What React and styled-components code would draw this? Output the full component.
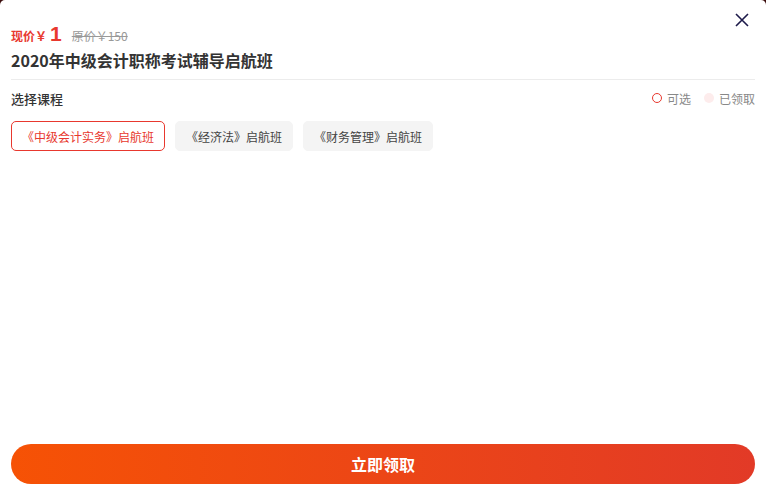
import React, { useState } from 'react';
import styled, { createGlobalStyle } from 'styled-components';

const GlobalStyle = createGlobalStyle`
  html, body {
    margin: 0;
    padding: 0;
    background: #3b0d0d;
  }
  body {
    font-family: "Noto Sans CJK SC", "Noto Sans", sans-serif;
  }
`

const Modal = styled.div`
  position: relative;
  width: 766px;
  height: 488px;
  box-sizing: border-box;
  background: #fff;
  border-radius: 5px 5px 0 0;
  padding: 22px 11px 4px;
  display: flex;
  flex-direction: column;
`
const CloseButton = styled.button`
  position: absolute;
  top: 11px;
  right: 15px;
  width: 18px;
  height: 18px;
  padding: 0;
  border: none;
  background: none;
  cursor: pointer;
  color: #1d1a4a;
`
const PriceRow = styled.div`
  display: flex;
  align-items: baseline;
  height: 27px;
`
const NowLabel = styled.span`
  color: #e8382e;
  font-size: 12px;
  font-weight: bold;
`
const NowValue = styled.span`
  color: #e8382e;
  font-family: "Liberation Sans", Arial, sans-serif;
  font-size: 21px;
  font-weight: bold;
  margin-left: 3px;
`
const OldPrice = styled.span`
  color: #999;
  font-size: 12px;
  text-decoration: line-through;
  margin-left: 10px;
`
const Title = styled.h1`
  margin: 0;
  font-size: 16px;
  line-height: 22px;
  font-weight: bold;
  color: #333;
  padding-bottom: 8px;
  border-bottom: 1px solid #ececec;
`
const SectionHead = styled.div`
  display: flex;
  justify-content: space-between;
  align-items: center;
  margin-top: 8px;
  height: 20px;
`
const SectionTitle = styled.span`
  font-size: 13px;
  font-weight: 500;
  color: #333;
`
const Legend = styled.div`
  display: flex;
  align-items: center;
  gap: 13px;
  font-size: 12px;
  color: #888;
`
const LegendItem = styled.span`
  display: flex;
  align-items: center;
  gap: 5px;
`
const Dot = styled.i`
  width: 10px;
  height: 10px;
  box-sizing: border-box;
  border-radius: 50%;
  border: ${p => (p.$filled ? 'none' : '1.5px solid #e8382e')};
  background: ${p => (p.$filled ? '#fdecec' : 'transparent')};
`
const Chips = styled.div`
  display: flex;
  gap: 10px;
  margin-top: 13px;
`
const Chip = styled.button`
  height: 30px;
  padding: 0 10px;
  box-sizing: border-box;
  border-radius: 5px;
  font-family: inherit;
  font-size: 12px;
  cursor: pointer;
  border: 1px solid ${p => (p.$active ? '#e8382e' : '#f4f4f4')};
  background: ${p => (p.$active ? '#fff' : '#f4f4f4')};
  color: ${p => (p.$active ? '#e8382e' : '#444')};
`
const Spacer = styled.div`
  flex: 1;
`
const Submit = styled.button`
  height: 40px;
  border: none;
  border-radius: 20px;
  background: linear-gradient(90deg, #f65205 0%, #e23a27 100%);
  color: #fff;
  font-family: inherit;
  font-size: 16px;
  font-weight: bold;
  cursor: pointer;
`

const courses = ['《中级会计实务》启航班', '《经济法》启航班', '《财务管理》启航班'];

const App = () => {
  const [selected, setSelected] = useState(0);

  return (
    <>
      <GlobalStyle />
      <Modal>
        <CloseButton aria-label="关闭">
          <svg width="18" height="18" viewBox="0 0 18 18">
            <path d="M3 3 L15 15 M15 3 L3 15" stroke="currentColor" strokeWidth="1.6" fill="none" />
          </svg>
        </CloseButton>
        <PriceRow>
          <NowLabel>现价￥</NowLabel>
          <NowValue>1</NowValue>
          <OldPrice>原价￥150</OldPrice>
        </PriceRow>
        <Title>2020年中级会计职称考试辅导启航班</Title>
        <SectionHead>
          <SectionTitle>选择课程</SectionTitle>
          <Legend>
            <LegendItem><Dot />可选</LegendItem>
            <LegendItem><Dot $filled />已领取</LegendItem>
          </Legend>
        </SectionHead>
        <Chips>
          {courses.map((c, i) => (
            <Chip key={c} $active={i === selected} onClick={() => setSelected(i)}>
              {c}
            </Chip>
          ))}
        </Chips>
        <Spacer />
        <Submit>立即领取</Submit>
      </Modal>
    </>
  )
}

export default App
